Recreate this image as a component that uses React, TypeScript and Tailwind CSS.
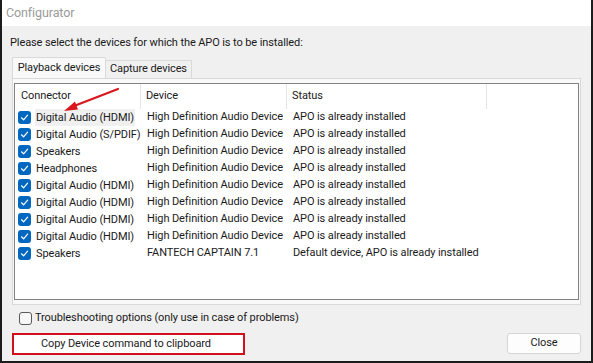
import React from "react";

const rows: [string, string, string][] = [
  ["Digital Audio (HDMI)", "High Definition Audio Device", "APO is already installed"],
  ["Digital Audio (S/PDIF)", "High Definition Audio Device", "APO is already installed"],
  ["Speakers", "High Definition Audio Device", "APO is already installed"],
  ["Headphones", "High Definition Audio Device", "APO is already installed"],
  ["Digital Audio (HDMI)", "High Definition Audio Device", "APO is already installed"],
  ["Digital Audio (HDMI)", "High Definition Audio Device", "APO is already installed"],
  ["Digital Audio (HDMI)", "High Definition Audio Device", "APO is already installed"],
  ["Digital Audio (HDMI)", "High Definition Audio Device", "APO is already installed"],
  ["Speakers", "FANTECH CAPTAIN 7.1", "Default device, APO is already installed"],
];

function Check() {
  return (
    <span className="flex h-[13px] w-[13px] shrink-0 items-center justify-center rounded-[3px] bg-[#0067c0]">
      <svg width="9" height="9" viewBox="0 0 9 9">
        <path d="M1.5 4.8 L3.6 6.8 L7.6 2.2" fill="none" stroke="white" strokeWidth="1.2" strokeLinecap="round" strokeLinejoin="round" />
      </svg>
    </span>
  );
}

export default function App() {
  return (
    <div
      className="relative flex h-[363px] w-[593px] flex-col overflow-hidden border-x-2 border-b-2 border-[#1c1c1c] text-[11px] tracking-[-0.1px] text-[#1a1a1a]"
      style={{ fontFamily: 'Roboto, "Liberation Sans", sans-serif' }}
    >
      <div className="flex h-[26px] shrink-0 items-center bg-white pl-[4px] text-[12.5px] text-[#9a9a9a]">Configurator</div>
      <div className="flex flex-1 flex-col bg-[#f0f0f0] px-[8px]">
        <div className="mt-[9px] h-[16px] whitespace-nowrap leading-[16px]">Please select the devices for which the APO is to be installed:</div>
        <div className="mt-[7px] flex h-[20px] items-end whitespace-nowrap pl-[2px]">
          <div className="relative z-10 flex h-[21px] w-[94px] items-center justify-center rounded-t-[2px] border border-b-0 border-[#d9d9d9] bg-[#f9f9f9]">Playback devices</div>
          <div className="flex h-[18px] w-[86px] items-center justify-center border border-b-0 border-l-0 border-[#d9d9d9] bg-[#f0f0f0]">Capture devices</div>
        </div>
        <div className="ml-[2px] mr-[2px] h-[227px] border border-[#d9d9d9] bg-[#f9f9f9] px-[1px] pt-[4px]">
          <div className="h-[217px] border border-[#828282] bg-white">
            <div className="flex h-[25px] items-center whitespace-nowrap">
              <div className="flex h-full w-[126px] items-center border-r border-[#e5e5e5] pl-[6px]">Connector</div>
              <div className="flex h-full w-[146px] items-center border-r border-[#e5e5e5] pl-[5px]">Device</div>
              <div className="flex h-full w-[200px] items-center border-r border-[#e5e5e5] pl-[5px]">Status</div>
            </div>
            {rows.map((r, i) => (
              <div key={i} className="flex h-[17px] items-center whitespace-nowrap">
                <div className="flex w-[126px] shrink-0 items-center pl-[3px]">
                  <Check />
                  <span className={"ml-[4px] px-[1px] leading-[17px] " + (i === 0 ? "bg-[#f0f0f0]" : "")}>{r[0]}</span>
                </div>
                <div className="w-[146px] shrink-0 pl-[6px]">{r[1]}</div>
                <div className="pl-[6px]">{r[2]}</div>
              </div>
            ))}
          </div>
        </div>
        <div className="mt-[5px] flex h-[16px] items-center whitespace-nowrap pl-[9px]">
          <span className="h-[13px] w-[13px] rounded-[3px] border border-[#5a5a5a] bg-[#f7f7f7]" />
          <span className="ml-[3px]">Troubleshooting options (only use in case of problems)</span>
        </div>
        <div className="mt-[7px] flex items-start justify-between whitespace-nowrap pl-[2px] pr-[2px]">
          <div className="flex h-[22px] w-[233px] items-center border-[2px] border-[#d0101e] bg-white pl-[27px]">Copy Device command to clipboard</div>
          <div className="flex h-[21px] w-[74px] items-center justify-center rounded-[3px] border border-[#d5d5d5] bg-[#fdfdfd]">Close</div>
        </div>
      </div>
      <svg className="pointer-events-none absolute left-0 top-0" width="593" height="363">
        <line x1="116" y1="89" x2="72" y2="106" stroke="#d8171e" strokeWidth="2.2" strokeLinecap="round" />
        <polygon points="62,111 73,101.5 76,109.5" fill="#d8171e" />
      </svg>
    </div>
  );
}
